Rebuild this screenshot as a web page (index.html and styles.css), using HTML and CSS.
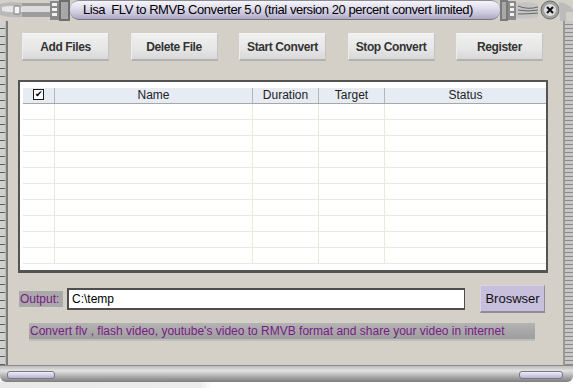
FILE: index.html
```html
<!DOCTYPE html>
<html>
<head>
<meta charset="UTF-8">
<link rel="stylesheet" href="styles.css">
<title>Lisa FLV to RMVB Converter 5.0</title>
</head>
<body>
	<div class="window">
		<div class="titlebar">
			<div class="capLeft">
				<svg width="70" height="21" viewBox="0 0 70 21">
					<path d="M0 4 Q8 1 22 3 L22 17 Q10 18 0 15 Z" fill="#b9b9b9"/>
					<path d="M2 7 Q10 5 22 7 L22 12 Q10 13 2 11 Z" fill="#e6e6e6"/>
					<rect x="22" y="3" width="30" height="14" fill="#9d9d9d"/>
					<rect x="22" y="6" width="30" height="6" fill="#dcdcdc"/>
					<rect x="14" y="6" width="6" height="8" rx="1" fill="#f4f4f4" stroke="#777" stroke-width="1"/>
					<rect x="50" y="1" width="9" height="19" fill="#8a8a8a"/>
					<rect x="52" y="3" width="5" height="3" fill="#f0f0f0"/>
					<rect x="52" y="8" width="5" height="3" fill="#f0f0f0"/>
					<rect x="52" y="13" width="5" height="3" fill="#f0f0f0"/>
					<rect x="59" y="0" width="11" height="21" fill="#6f6f6f"/>
					<rect x="61" y="2" width="7" height="17" fill="#a8a8a8"/>
				</svg>
			</div>
			<div class="titlePill">Lisa&nbsp; FLV to RMVB Converter 5.0 (trial version 20 percent convert limited)</div>
			<div class="capRight">
				<svg width="73" height="21" viewBox="0 0 73 21">
					<rect x="0" y="0" width="8" height="21" fill="#7a7a7a"/>
					<rect x="2" y="2" width="4" height="17" fill="#a9a9a9"/>
					<rect x="8" y="1" width="8" height="19" fill="#8a8a8a"/>
					<rect x="10" y="3" width="4" height="3" fill="#f0f0f0"/>
					<rect x="10" y="8" width="4" height="3" fill="#f0f0f0"/>
					<rect x="10" y="13" width="4" height="3" fill="#f0f0f0"/>
					<path d="M16 3 Q30 1 38 4 L38 17 Q30 20 16 18 Z" fill="#c4c4c4"/>
					<path d="M18 6 Q28 10 38 7 M18 10 Q28 12 38 10 M18 14 Q28 14 38 13" stroke="#666" stroke-width="1" fill="none"/>
					<circle cx="50" cy="10" r="9" fill="#a2a2a2" stroke="#6a6a6a"/>
					<circle cx="50" cy="10" r="6" fill="#dedede"/>
					<path d="M47 7 L53 13 M53 7 L47 13" stroke="#111" stroke-width="2"/>
					<path d="M59 2 Q70 4 73 10 L73 21 L60 21 Z" fill="#bcbcbc"/>
					<rect x="66" y="12" width="7" height="9" fill="#d4d0c8"/>
				</svg>
			</div>
		</div>

		<div class="frame">
			<div class="sideLeft"></div>
			<div class="client">
				<div class="toolbar">
					<div class="toolButton">Add Files</div>
					<div class="toolButton">Delete File</div>
					<div class="toolButton">Start Convert</div>
					<div class="toolButton">Stop Convert</div>
					<div class="toolButton">Register</div>
				</div>

				<div class="listFrame">
					<table class="fileList">
						<thead>
							<tr>
								<th class="colCheck"><span class="checkBox">&#x2714;</span></th>
								<th class="colName">Name</th>
								<th class="colDuration">Duration</th>
								<th class="colTarget">Target</th>
								<th class="colStatus">Status</th>
							</tr>
						</thead>
						<tbody>
							<tr><td></td><td></td><td></td><td></td><td></td></tr>
							<tr><td></td><td></td><td></td><td></td><td></td></tr>
							<tr><td></td><td></td><td></td><td></td><td></td></tr>
							<tr><td></td><td></td><td></td><td></td><td></td></tr>
							<tr><td></td><td></td><td></td><td></td><td></td></tr>
							<tr><td></td><td></td><td></td><td></td><td></td></tr>
							<tr><td></td><td></td><td></td><td></td><td></td></tr>
							<tr><td></td><td></td><td></td><td></td><td></td></tr>
							<tr><td></td><td></td><td></td><td></td><td></td></tr>
							<tr><td></td><td></td><td></td><td></td><td></td></tr>
						</tbody>
					</table>
				</div>

				<div class="outputRow">
					<div class="outputLabel">Output:</div>
					<div class="outputPath">C:\temp</div>
					<div class="browseButton">Broswser</div>
				</div>

				<div class="statusLine">Convert flv , flash video, youtube's video to RMVB format and share your video in internet</div>
			</div>
			<div class="sideRight"></div>
		</div>

		<div class="bottombar">
			<div class="pillLeft"></div>
			<div class="pillRight"></div>
		</div>
		<div class="below"></div>
	</div>
</body>
</html>
```

FILE: styles.css
```css
body{
	margin: 0;
	background: #ffffff;
	font-family: "Liberation Sans", Arial, sans-serif;
	font-size: 12px;
}

.window{
	width: 573px;
	height: 388px;
	display: flex;
	flex-direction: column;
	overflow: hidden;
}

/* title bar */
.titlebar{
	height: 21px;
	flex: none;
	display: flex;
	background: #d4d0c8;
}

.capLeft, .capRight{
	height: 21px;
	line-height: 0;
}

.titlePill{
	flex: 1;
	height: 20px;
	border-radius: 9px 9px 9px 9px;
	background: linear-gradient(#f6f5fa 0%, #e2e0ee 35%, #c9c5dc 70%, #aca8c2 100%);
	border-top: 1px solid #8c8c94;
	border-bottom: 1px solid #77737f;
	box-sizing: border-box;
	padding-left: 13px;
	font-size: 13px;
	line-height: 18px;
	color: #000;
	white-space: nowrap;
	letter-spacing: -0.45px;
}

/* frame sides */
.frame{
	flex: 1;
	display: flex;
}

.sideLeft{
	width: 8px;
	background:
		repeating-linear-gradient(#d0d0d0 0px, #d0d0d0 7px, #5e5e5e 7px, #5e5e5e 8px),
		#bbb;
	background-size: 5px 100%;
	background-repeat: no-repeat;
	border-right: 2px solid #7d7b77;
	box-sizing: border-box;
}

.sideRight{
	width: 10px;
	background:
		repeating-linear-gradient(#c8c8c8 0px, #c8c8c8 3px, #8a8a8a 3px, #8a8a8a 4px);
	border-left: 2px solid #9a9892;
	box-sizing: border-box;
}

.client{
	flex: 1;
	background: #d4d0c8;
	display: flex;
	flex-direction: column;
	padding: 12px 0 0 10px;
}

/* buttons */
.toolbar{
	display: flex;
	justify-content: space-between;
	margin: 0 20px 0 4px;
}

.toolButton{
	width: 87px;
	height: 28px;
	box-sizing: border-box;
	background: linear-gradient(#f0f0f0 0%, #e6e6e6 60%, #d8d8d8 100%);
	border-top: 1px solid #f4f4f4;
	border-left: 1px solid #ececec;
	border-right: 1px solid #c4c4c4;
	border-bottom: 2px solid #b4b2ae;
	text-align: center;
	line-height: 26px;
	font-weight: bold;
	color: #333333;
	letter-spacing: -0.4px;
	cursor: default;
}

/* file list */
.listFrame{
	width: 530px;
	height: 193px;
	margin-top: 19px;
	box-sizing: border-box;
	border: 2px solid #545454;
	border-bottom-width: 3px;
	background: #ffffff;
	padding: 6px 3px 0 3px;
	overflow: hidden;
}

.fileList{
	border-collapse: collapse;
	table-layout: fixed;
	width: 519px;
}

.fileList th{
	height: 15px;
	padding: 0;
	background: #e7ebf3;
	border-bottom: 1px solid #a7a7a7;
	border-left: 1px solid #b6b6b6;
	font-weight: normal;
	color: #222;
	line-height: 15px;
}

.fileList th:first-child{
	border-left: none;
}

.fileList td{
	height: 15px;
	padding: 0;
	border-bottom: 1px solid #ece9dc;
	border-left: 1px solid #ece9dc;
}

.fileList td:first-child{
	border-left: none;
}

.colCheck{ width: 31px; }
.colName{ width: 197px; }
.colDuration{ width: 65px; }
.colTarget{ width: 65px; }
.colStatus{ width: 161px; }

.checkBox{
	display: inline-block;
	width: 9px;
	height: 9px;
	border: 1px solid #1a1a1a;
	background: #fff;
	font-size: 9px;
	line-height: 9px;
	text-align: center;
	vertical-align: middle;
	color: #000;
	margin-top: -2px;
}

/* output */
.outputRow{
	display: flex;
	align-items: center;
	margin-top: 12px;
	height: 28px;
}

.outputLabel{
	margin-left: 1px;
	width: 44px;
	height: 16px;
	background: #a9a9a9;
	color: #7a1a86;
	line-height: 16px;
	padding-left: 1px;
	box-sizing: border-box;
}

.outputPath{
	margin-left: 4px;
	width: 398px;
	height: 22px;
	box-sizing: border-box;
	border: 2px solid #4e4e4e;
	border-right-width: 1px;
	background: #ffffff;
	padding-left: 3px;
	line-height: 18px;
	color: #000;
}

.browseButton{
	margin-left: 15px;
	width: 65px;
	height: 28px;
	box-sizing: border-box;
	background: #c7bfdc;
	border-top: 1px solid #d8d2e8;
	border-left: 1px solid #d8d2e8;
	border-right: 1px solid #8f8a9c;
	border-bottom: 2px solid #8f8a9c;
	text-align: center;
	line-height: 25px;
	font-size: 13px;
	color: #111;
}

.statusLine{
	margin: 10px 0 0 11px;
	width: 506px;
	height: 18px;
	box-sizing: border-box;
	background: linear-gradient(#b4b4b4 0%, #a8a8a8 50%, #9e9e9e 100%);
	border-bottom: 2px solid #bdbdbd;
	color: #7a1a86;
	line-height: 16px;
	padding-left: 1px;
	white-space: nowrap;
}

/* bottom */
.bottombar{
	height: 17px;
	flex: none;
	position: relative;
	background: linear-gradient(#bcbcbc 0%, #e2e2e2 30%, #a6a6a6 70%, #7d7d7d 100%);
	border-top: 1px solid #8a8a8a;
	border-radius: 0 0 6px 6px;
	box-sizing: border-box;
}

.pillLeft, .pillRight{
	position: absolute;
	top: 5px;
	height: 6px;
	border-radius: 3px;
	background: linear-gradient(#f0eef8, #b7b2d2);
	border: 1px solid #7a7688;
}

.pillLeft{
	left: 7px;
	width: 46px;
}

.pillRight{
	right: 10px;
	width: 42px;
}

.below{
	height: 6px;
	flex: none;
	background: linear-gradient(90deg, #e9e9e9 0px, #ececec 200px, #ffffff 212px);
}
```
